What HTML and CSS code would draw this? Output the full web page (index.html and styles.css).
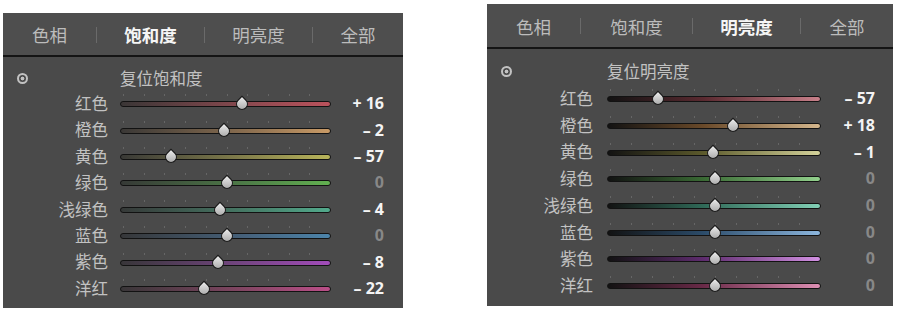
FILE: index.html
```html
<!DOCTYPE html>
<html>
    <head>
        <title>HSL</title>
        <link rel="stylesheet" href="styles.css">
    </head>
    <body>
        <div class="page">

            <section class="panel panel_sat">
                <nav class="tabs">
                    <span class="tab"><span class="tab_text">色相</span></span>
                    <span class="tab active"><span class="tab_text">饱和度</span></span>
                    <span class="tab"><span class="tab_text">明亮度</span></span>
                    <span class="tab"><span class="tab_text">全部</span></span>
                </nav>
                <div class="sliders">
                    <div class="reset">
                        <span class="reset_icon"></span>
                        <span class="reset_text">复位饱和度</span>
                    </div>
                    <div class="row">
                        <span class="label">红色</span>
                        <div class="track red"><span class="thumb" style="left: 57.8%"></span></div>
                        <span class="value">+ 16</span>
                    </div>
                    <div class="row">
                        <span class="label">橙色</span>
                        <div class="track orange"><span class="thumb" style="left: 49.3%"></span></div>
                        <span class="value">– 2</span>
                    </div>
                    <div class="row">
                        <span class="label">黄色</span>
                        <div class="track yellow"><span class="thumb" style="left: 23.7%"></span></div>
                        <span class="value">– 57</span>
                    </div>
                    <div class="row">
                        <span class="label">绿色</span>
                        <div class="track green"><span class="thumb" style="left: 50.7%"></span></div>
                        <span class="value zero">0</span>
                    </div>
                    <div class="row">
                        <span class="label">浅绿色</span>
                        <div class="track aqua"><span class="thumb" style="left: 47.4%"></span></div>
                        <span class="value">– 4</span>
                    </div>
                    <div class="row">
                        <span class="label">蓝色</span>
                        <div class="track blue"><span class="thumb" style="left: 50.7%"></span></div>
                        <span class="value zero">0</span>
                    </div>
                    <div class="row">
                        <span class="label">紫色</span>
                        <div class="track purple"><span class="thumb" style="left: 46.4%"></span></div>
                        <span class="value">– 8</span>
                    </div>
                    <div class="row">
                        <span class="label">洋红</span>
                        <div class="track magenta"><span class="thumb" style="left: 39.8%"></span></div>
                        <span class="value">– 22</span>
                    </div>
                </div>
            </section>

            <section class="panel panel_lum">
                <nav class="tabs">
                    <span class="tab"><span class="tab_text">色相</span></span>
                    <span class="tab"><span class="tab_text">饱和度</span></span>
                    <span class="tab active"><span class="tab_text">明亮度</span></span>
                    <span class="tab"><span class="tab_text">全部</span></span>
                </nav>
                <div class="sliders">
                    <div class="reset">
                        <span class="reset_icon"></span>
                        <span class="reset_text">复位明亮度</span>
                    </div>
                    <div class="row">
                        <span class="label">红色</span>
                        <div class="track red"><span class="thumb" style="left: 23.8%"></span></div>
                        <span class="value">– 57</span>
                    </div>
                    <div class="row">
                        <span class="label">橙色</span>
                        <div class="track orange"><span class="thumb" style="left: 58.9%"></span></div>
                        <span class="value">+ 18</span>
                    </div>
                    <div class="row">
                        <span class="label">黄色</span>
                        <div class="track yellow"><span class="thumb" style="left: 49.5%"></span></div>
                        <span class="value">– 1</span>
                    </div>
                    <div class="row">
                        <span class="label">绿色</span>
                        <div class="track green"><span class="thumb" style="left: 50.5%"></span></div>
                        <span class="value zero">0</span>
                    </div>
                    <div class="row">
                        <span class="label">浅绿色</span>
                        <div class="track aqua"><span class="thumb" style="left: 50.5%"></span></div>
                        <span class="value zero">0</span>
                    </div>
                    <div class="row">
                        <span class="label">蓝色</span>
                        <div class="track blue"><span class="thumb" style="left: 50.5%"></span></div>
                        <span class="value zero">0</span>
                    </div>
                    <div class="row">
                        <span class="label">紫色</span>
                        <div class="track purple"><span class="thumb" style="left: 50.5%"></span></div>
                        <span class="value zero">0</span>
                    </div>
                    <div class="row">
                        <span class="label">洋红</span>
                        <div class="track magenta"><span class="thumb" style="left: 50.5%"></span></div>
                        <span class="value zero">0</span>
                    </div>
                </div>
            </section>

        </div>
    </body>
</html>
```

FILE: styles.css
```css
body {
    margin: 0;
    background-color: #ffffff;
    font-family: "Noto Sans CJK SC", "Noto Sans", sans-serif;
}

.page {
    display: flex;
    align-items: flex-start;
}

.panel {
    background-color: #4a4a4a;
    color: #c2c2c2;
}

/* left panel: saturation */
.panel_sat {
    width: 400px;
    margin-top: 13px;
    margin-left: 3px;
    --tabs-h: 44px;
    --tabs-cols: 93px 108px 108px 1fr;
    --cols: 105px 211px 41px;
    --gap: 12px;
    --pad-top: 9px;
    --pad-right: 19px;
    --pad-bottom: 7px;
    --row-h: 26.4px;
    --reset-gap: 0px;
}

/* right panel: luminance */
.panel_lum {
    width: 406px;
    margin-top: 4px;
    margin-left: 84px;
    --tabs-h: 45px;
    --tabs-cols: 93px 112px 108px 1fr;
    --cols: 106px 214px 40px;
    --gap: 14px;
    --pad-top: 10px;
    --pad-right: 18px;
    --pad-bottom: 7px;
    --row-h: 26.7px;
    --reset-gap: 2px;
}

.tabs {
    display: grid;
    grid-template-columns: var(--tabs-cols);
    height: var(--tabs-h);
    padding-top: 1px;
    box-sizing: border-box;
    background-color: #4e4e4e;
    border-bottom: 2px solid #141414;
    font-size: 17.5px;
    color: #bcbcbc;
}

.tab {
    display: flex;
    align-items: center;
}

.tab + .tab::before {
    content: "";
    width: 1px;
    height: 16px;
    background-color: #6a6a6a;
}

.tab_text {
    flex: 1;
    text-align: center;
}

.tab.active {
    color: #f6f6f6;
    font-weight: bold;
}

.sliders {
    padding: var(--pad-top) var(--pad-right) var(--pad-bottom) 0;
    font-size: 16.5px;
}

.reset,
.row {
    display: grid;
    grid-template-columns: var(--cols);
    column-gap: var(--gap);
    align-items: center;
}

.reset {
    height: 24px;
    margin-bottom: var(--reset-gap);
}

.reset_icon {
    width: 7px;
    height: 7px;
    margin-left: 14px;
    border: 2px solid #c2c2c2;
    border-radius: 50%;
    background: radial-gradient(circle, #c2c2c2 0 1.6px, transparent 2.2px);
}

.row {
    height: var(--row-h);
}

.label {
    text-align: right;
    line-height: 1;
}

.value {
    text-align: right;
    font-family: "Open Sans", "Liberation Sans", sans-serif;
    font-weight: 700;
    font-size: 16px;
    color: #f4f4f4;
}

.value.zero {
    color: #888888;
}

.track {
    position: relative;
    height: 4px;
    margin-top: 2px;
    border: 1px solid #121212;
    border-radius: 3px;
}

.track::before {
    content: "";
    position: absolute;
    left: 2px;
    right: 0;
    top: -8px;
    height: 2px;
    background: repeating-linear-gradient(to right, #666666 0 1px, transparent 1px 10%);
}

.thumb {
    position: absolute;
    top: 50%;
    width: 10px;
    height: 10px;
    margin-top: 0px;
    border: 1px solid #1a1a1a;
    border-radius: 0 50% 50% 50%;
    background: linear-gradient(135deg, #ececec, #a4a4a4);
    transform: translate(-50%, -50%) rotate(45deg);
}

/* saturation gradients */
.panel_sat .red { background: linear-gradient(to right, #3a3636, #8a4a50 60%, #bb525c); }
.panel_sat .orange { background: linear-gradient(to right, #3a3836, #8a6e50 60%, #c89a66); }
.panel_sat .yellow { background: linear-gradient(to right, #393936, #84804c 60%, #b8b45a); }
.panel_sat .green { background: linear-gradient(to right, #363936, #4e7c48 60%, #62b050); }
.panel_sat .aqua { background: linear-gradient(to right, #363938, #467a66 60%, #52aa8c); }
.panel_sat .blue { background: linear-gradient(to right, #363739, #46627c 60%, #4c84aa); }
.panel_sat .purple { background: linear-gradient(to right, #383639, #764684 60%, #a24cba); }
.panel_sat .magenta { background: linear-gradient(to right, #393638, #844664 60%, #bb4e88); }

/* luminance gradients */
.panel_lum .red { background: linear-gradient(to right, #121212, #5a2a30 45%, #c8808a); }
.panel_lum .orange { background: linear-gradient(to right, #121212, #6a4a2a 45%, #d4b68c); }
.panel_lum .yellow { background: linear-gradient(to right, #121212, #5c5a2c 45%, #d4d29a); }
.panel_lum .green { background: linear-gradient(to right, #121212, #3a6a34 45%, #92d08c); }
.panel_lum .aqua { background: linear-gradient(to right, #121212, #306a58 45%, #82d0b6); }
.panel_lum .blue { background: linear-gradient(to right, #121212, #2c4c6a 45%, #8cb6de); }
.panel_lum .purple { background: linear-gradient(to right, #121212, #5e2c6e 45%, #d290e2); }
.panel_lum .magenta { background: linear-gradient(to right, #121212, #6a2a48 45%, #de90b4); }
```
